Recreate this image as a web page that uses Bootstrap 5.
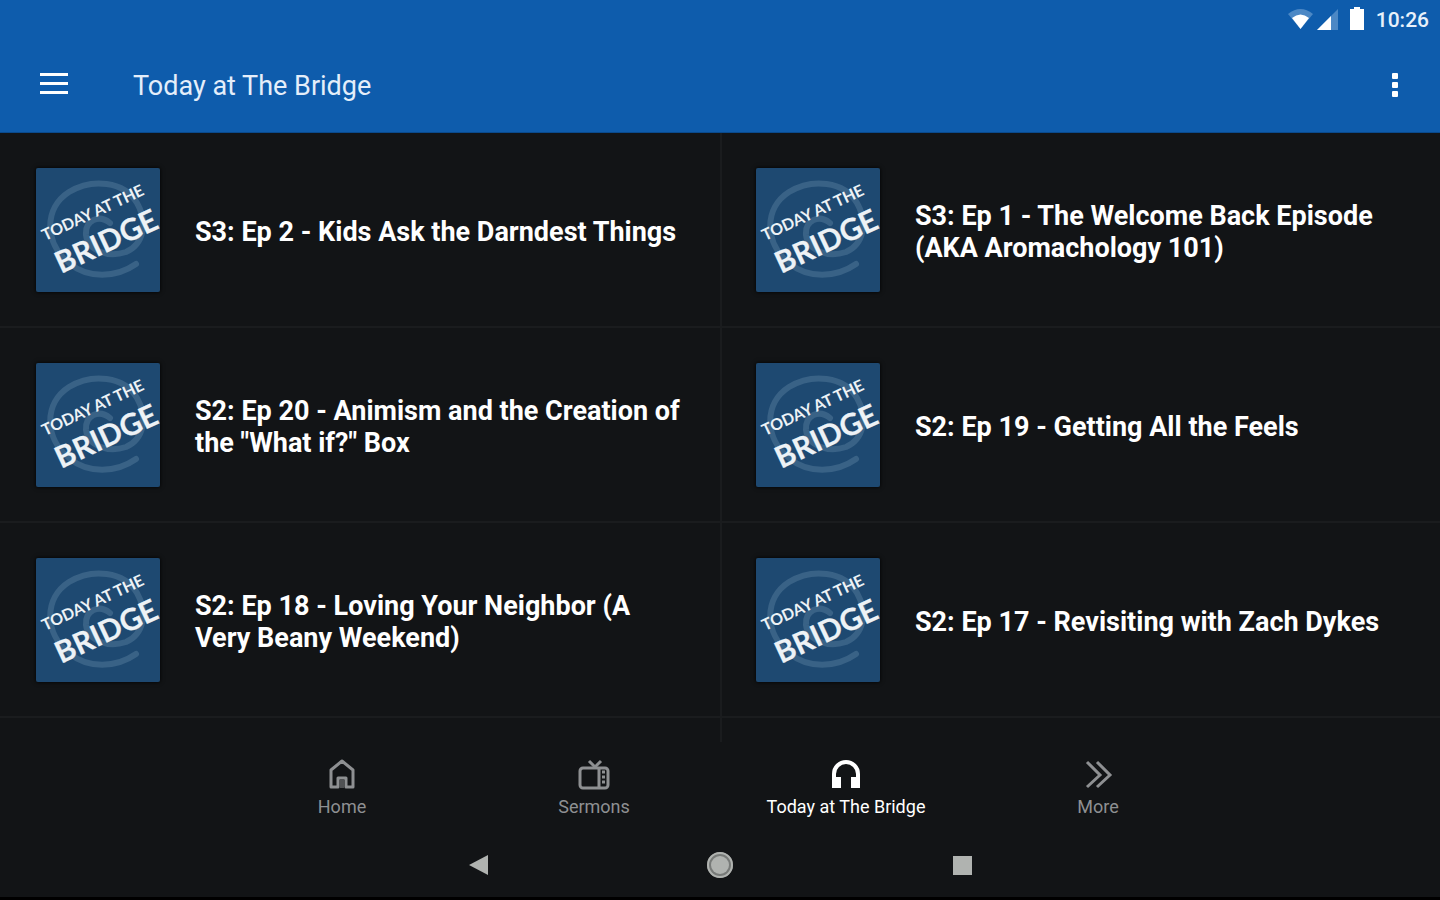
<!DOCTYPE html>
<html lang="en">
<head>
<meta charset="utf-8">
<meta name="viewport" content="width=device-width, initial-scale=1">
<title>Today at The Bridge</title>
<link href="https://cdn.jsdelivr.net/npm/bootstrap@5.3.0/dist/css/bootstrap.min.css" rel="stylesheet">
<style>
  body { background: #121416; color: #fff; font-family: Roboto, "Liberation Sans", sans-serif; }
  .app-header { background: #0e5cac; border-bottom: 1px solid #0a4a8c; }
  .status-bar { height: 40px; padding-right: 11px; font-size: 21px; line-height: 24px; font-weight: 500; color: #e8f1fb; }
  .toolbar { height: 92px; padding: 0 40px 2px 39px; }
  .toolbar h1 { font-size: 27px; line-height: 32px; padding-top: 2px; margin-left: 64px; color: #e4eefa; }
  .icon-btn { background: none; border: 0; padding: 0; line-height: 0; color: #fff; }
  .episodes { min-height: 0; }
  .episode { height: 195px; padding: 0 36px; gap: 35px; border-bottom: 2px solid #1a1c1e; color: #fff; font-size: 27px; line-height: 32px; font-weight: 700; }
  .episode span { padding-top: 4px; }
  .episode-col:nth-child(even) { border-left: 2px solid #1a1c1e; }
  .episode-col:nth-child(even) .episode { padding-left: 34px; }
  .cover { width: 124px; height: 124px; box-shadow: 0 0 4px #000; }
  .tabs { height: 92px; }
  .tabs ul { width: 70%; }
  .tab-link { color: #8e9092; font-size: 18px; line-height: 24px; gap: 5px; }
  .tab-link.active { color: #fff; }
  .system-bar { height: 66px; border-bottom: 3px solid #000; padding-bottom: 2px; }
  .system-bar .icon-btn { color: #b0b3b0; }
</style>
</head>
<body class="vh-100 d-flex flex-column overflow-hidden">
<svg class="d-none" aria-hidden="true">
  <symbol id="cover" viewBox="0 0 124 124">
    <rect width="124" height="124" rx="2" fill="#1e4971"/>
    <path d="M100 96C80 110 52 111 33 95C8 75 8 40 33 24C56 10 88 13 101 35C112 54 108 76 90 84C72 90 52 83 50 67C49 52 63 46 74 55" fill="none" stroke="#396286" stroke-width="6" stroke-linecap="round"/>
    <g fill="#edf2f6" font-family="Lato, sans-serif">
      <text transform="translate(9 73) rotate(-25)" font-size="16">TODAY AT THE</text>
      <text transform="translate(25 106) rotate(-25)" font-size="30" stroke="#edf2f6" stroke-width=".2">BRIDGE</text>
    </g>
  </symbol>
</svg>

<header class="app-header flex-shrink-0">
  <div class="status-bar d-flex align-items-center justify-content-end">
    <svg width="80" height="28" viewBox="0 0 80 28" class="me-2" aria-hidden="true">
      <path d="M0 8Q12.500-2 25 8L12.500 23Z" fill="#4c88c5"/>
      <path d="M4 12Q12.500 5 21 12L12.500 23Z" fill="#fff"/>
      <path d="M29 24L50 3V24Z" fill="#4c88c5"/>
      <path d="M29 24L43 10V24Z" fill="#fff"/>
      <path d="M66 1h6v2h4v21H62V3h4Z" fill="#fff"/>
    </svg>
    <span>10:26</span>
  </div>
  <div class="toolbar d-flex align-items-center">
    <button class="icon-btn" type="button" aria-label="Open menu">
      <svg width="30" height="24" viewBox="0 0 30 24" fill="currentColor"><path d="M1 0h28v3H1zM1 9h28v3H1zM1 18h28v3H1z"/></svg>
    </button>
    <h1 class="mb-0 fw-normal">Today at The Bridge</h1>
    <button class="icon-btn ms-auto" type="button" aria-label="More options">
      <svg width="10" height="28" viewBox="0 0 10 28" fill="currentColor"><rect x="2" y="2" width="6" height="6" rx="1"/><rect x="2" y="11" width="6" height="6" rx="1"/><rect x="2" y="20" width="6" height="6" rx="1"/></svg>
    </button>
  </div>
</header>

<main class="episodes flex-fill overflow-hidden">
  <div class="row g-0">
    <div class="col-6 episode-col"><a href="#" class="episode d-flex align-items-center text-decoration-none"><svg class="cover flex-shrink-0"><use href="#cover"/></svg><span>S3: Ep 2 - Kids Ask the Darndest Things</span></a></div>
    <div class="col-6 episode-col"><a href="#" class="episode d-flex align-items-center text-decoration-none"><svg class="cover flex-shrink-0"><use href="#cover"/></svg><span>S3: Ep 1 - The Welcome Back Episode (AKA Aromachology 101)</span></a></div>
    <div class="col-6 episode-col"><a href="#" class="episode d-flex align-items-center text-decoration-none"><svg class="cover flex-shrink-0"><use href="#cover"/></svg><span>S2: Ep 20 - Animism and the Creation of the "What if?" Box</span></a></div>
    <div class="col-6 episode-col"><a href="#" class="episode d-flex align-items-center text-decoration-none"><svg class="cover flex-shrink-0"><use href="#cover"/></svg><span>S2: Ep 19 - Getting All the Feels</span></a></div>
    <div class="col-6 episode-col"><a href="#" class="episode d-flex align-items-center text-decoration-none"><svg class="cover flex-shrink-0"><use href="#cover"/></svg><span>S2: Ep 18 - Loving Your Neighbor (A Very Beany Weekend)</span></a></div>
    <div class="col-6 episode-col"><a href="#" class="episode d-flex align-items-center text-decoration-none"><svg class="cover flex-shrink-0"><use href="#cover"/></svg><span>S2: Ep 17 - Revisiting with Zach Dykes</span></a></div>
    <div class="col-6 episode-col py-3"></div>
    <div class="col-6 episode-col py-3"></div>
  </div>
</main>

<nav class="tabs flex-shrink-0 d-flex justify-content-center align-items-center" aria-label="Sections">
  <ul class="list-unstyled row g-0 mb-0">
    <li class="col-3"><a href="#" class="tab-link d-flex flex-column align-items-center text-decoration-none">
      <svg width="32" height="32" viewBox="0 0 32 32" fill="none" stroke="currentColor" stroke-width="3" stroke-linejoin="round"><path d="M5 29V12L16 3L27 12V29H20V20H12V29Z"/><path d="M16 22v8" stroke-width="4" opacity=".5"/></svg>Home</a></li>
    <li class="col-3"><a href="#" class="tab-link d-flex flex-column align-items-center text-decoration-none">
      <svg width="34" height="32" viewBox="0 0 34 32" fill="none" stroke="currentColor" stroke-width="3"><rect x="3" y="10" width="28" height="20" rx="3"/><path d="M22 10v20M12 3l6 6 6-6"/><path d="M25 14h3M25 19h3M25 24h3"/></svg>Sermons</a></li>
    <li class="col-3"><a href="#" class="tab-link active d-flex flex-column align-items-center text-decoration-none" aria-current="page">
      <svg width="32" height="32" viewBox="0 0 32 32"><path d="M4 29V16a12 12 0 0 1 24 0v13" fill="none" stroke="currentColor" stroke-width="4"/><path d="M2 19h9v11H2zM21 19h9v11H21z" fill="currentColor"/></svg>Today at The Bridge</a></li>
    <li class="col-3"><a href="#" class="tab-link d-flex flex-column align-items-center text-decoration-none">
      <svg width="32" height="32" viewBox="0 0 32 32" fill="none" stroke="currentColor" stroke-width="3"><path d="M5 4l13 13L5 29M15 4l13 13-13 12"/></svg>More</a></li>
  </ul>
</nav>

<footer class="system-bar flex-shrink-0 d-flex justify-content-center align-items-center">
  <div class="w-50 d-flex justify-content-around">
    <button class="icon-btn" type="button" aria-label="Back"><svg width="22" height="28" viewBox="0 0 22 28" fill="currentColor"><path d="M1 14L20 4V24Z"/></svg></button>
    <button class="icon-btn" type="button" aria-label="Home"><svg width="28" height="28" viewBox="0 0 28 28"><circle cx="14" cy="14" r="13" fill="#777a78"/><circle cx="14" cy="14" r="12" fill="none" stroke="currentColor" stroke-width="2"/><circle cx="14" cy="14" r="9" fill="currentColor"/></svg></button>
    <button class="icon-btn" type="button" aria-label="Recent apps"><svg width="22" height="28" viewBox="0 0 22 28" fill="currentColor"><rect x="3" y="5" width="19" height="19"/></svg></button>
  </div>
</footer>
<script src="https://cdn.jsdelivr.net/npm/bootstrap@5.3.0/dist/js/bootstrap.bundle.min.js"></script>
</body>
</html>
